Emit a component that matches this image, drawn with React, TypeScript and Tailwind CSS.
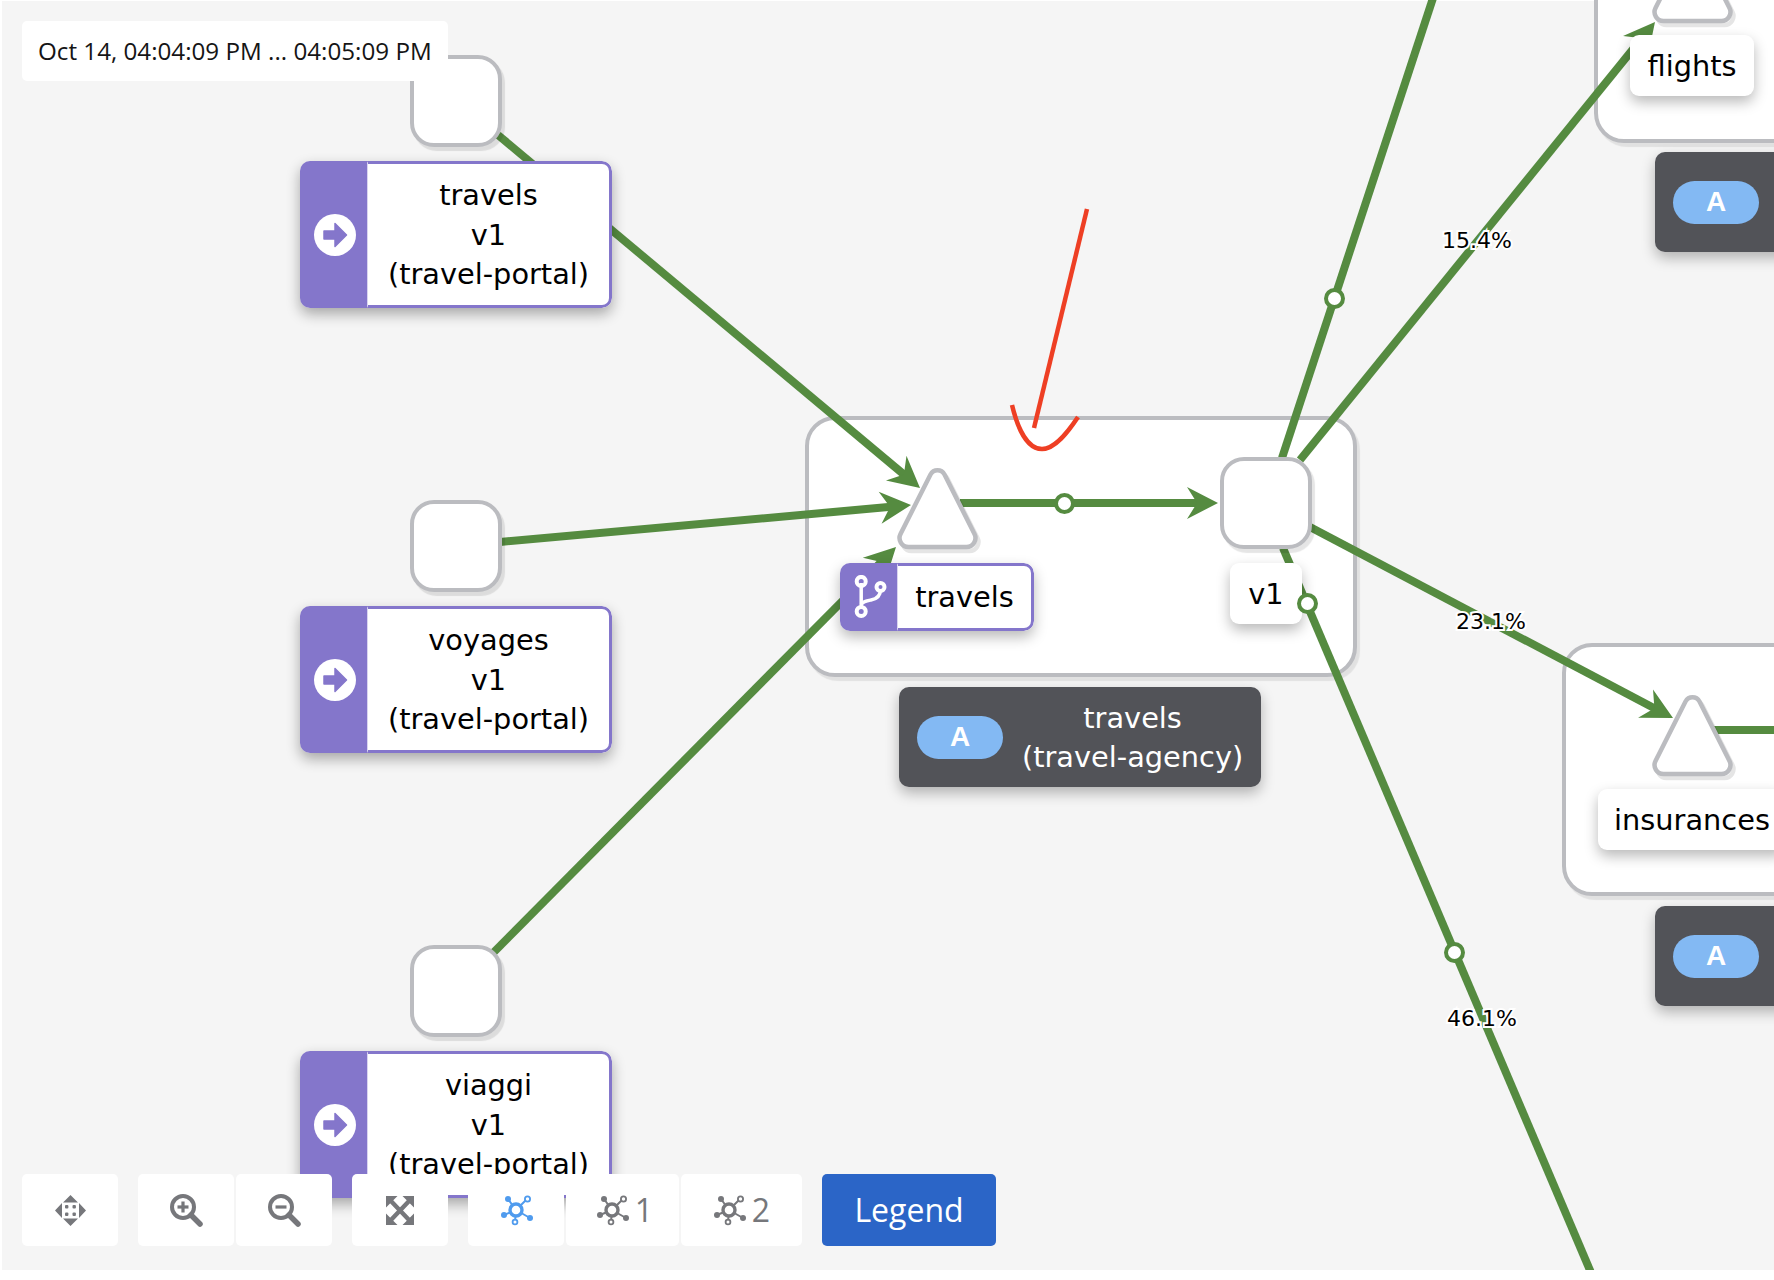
import clsx from "clsx";
import type { ReactNode } from "react";

const GREEN = "#558b40";

type Edge = { x1: number; y1: number; x2: number; y2: number; arrow?: boolean };

const edges: Edge[] = [
  { x1: 498, y1: 135, x2: 920, y2: 488, arrow: true },
  { x1: 500, y1: 542, x2: 911, y2: 505, arrow: true },
  { x1: 493, y1: 953, x2: 896, y2: 547, arrow: true },
  { x1: 960, y1: 503, x2: 1218, y2: 503, arrow: true },
  { x1: 1282, y1: 458, x2: 1434, y2: -5 },
  { x1: 1300, y1: 460, x2: 1655, y2: 22, arrow: true },
  { x1: 1310, y1: 527, x2: 1673, y2: 718, arrow: true },
  { x1: 1283, y1: 548, x2: 1592, y2: 1275 },
  { x1: 1714, y1: 730, x2: 1780, y2: 730 },
];

// swallowtail head, same size on every edge
function arrowHead(e: Edge) {
  const len = Math.hypot(e.x2 - e.x1, e.y2 - e.y1);
  const ux = (e.x2 - e.x1) / len;
  const uy = (e.y2 - e.y1) / len;
  const at = (back: number, side: number) =>
    `${e.x2 - ux * back - uy * side},${e.y2 - uy * back + ux * side}`;
  return [at(0, 0), at(31, 16), at(21, 0), at(31, -16)].join(" ");
}

function Edges() {
  return (
    <svg className="absolute left-0 top-0" width="1774" height="1270" viewBox="0 0 1774 1270">
      {edges.map((e, i) => {
        const len = Math.hypot(e.x2 - e.x1, e.y2 - e.y1);
        const trim = e.arrow ? 20 / len : 0;
        return (
          <g key={i}>
            <line
              x1={e.x1}
              y1={e.y1}
              x2={e.x2 - (e.x2 - e.x1) * trim}
              y2={e.y2 - (e.y2 - e.y1) * trim}
              stroke={GREEN}
              strokeWidth={8}
            />
            {e.arrow && <polygon points={arrowHead(e)} fill={GREEN} />}
          </g>
        );
      })}
    </svg>
  );
}

function Dot({ className }: { className: string }) {
  return (
    <div
      className={clsx(
        "absolute h-[21px] w-[21px] rounded-full border-4 border-[#558b40] bg-white",
        className,
      )}
    />
  );
}

function SquareNode({ className }: { className: string }) {
  return (
    <div
      className={clsx(
        "absolute h-[92px] w-[92px] rounded-[24px] border-[4.5px] border-[#bbbcc0] bg-white shadow-[3px_4px_1px_rgba(0,0,0,0.1)]",
        className,
      )}
    />
  );
}

const TRIANGLE =
  "M33.5 6.5A8 8 0 0 1 47.5 6.5L77.5 66A9 9 0 0 1 69.5 79L11.5 79A9 9 0 0 1 3.5 66Z";

function TriangleNode({ className }: { className: string }) {
  return (
    <svg
      className={clsx("absolute overflow-visible", className)}
      width="81"
      height="81"
      viewBox="0 0 81 81"
    >
      <path d={TRIANGLE} transform="translate(3 4)" fill="none" stroke="#000" strokeOpacity="0.1" strokeWidth="4.5" />
      <path d={TRIANGLE} fill="#fff" stroke="#bbbcc0" strokeWidth="4.5" />
    </svg>
  );
}

function Box({ className }: { className: string }) {
  return (
    <div
      className={clsx(
        "absolute rounded-[30px] border-[4.5px] border-[#bbbcc0] bg-white shadow-[3px_4px_1px_rgba(0,0,0,0.08)]",
        className,
      )}
    />
  );
}

function WhiteLabel({ className, children }: { className: string; children: ReactNode }) {
  return (
    <div
      className={clsx(
        "absolute flex h-[61px] items-center justify-center rounded-[9px] bg-white pt-0.5 text-[28.8px] text-black shadow-[0_6px_14px_rgba(0,0,0,0.28)]",
        className,
      )}
    >
      {children}
    </div>
  );
}

function ArrowCircle() {
  return (
    <svg width="42" height="42" viewBox="0 0 42 42">
      <circle cx="21" cy="21" r="21" fill="#fff" />
      <path d="M10 17h11v-7.5L32.5 21 21 32.5V25H10z" fill="#8476cb" strokeLinejoin="round" stroke="#8476cb" strokeWidth="1.5" />
    </svg>
  );
}

function WorkloadLabel({ className, lines }: { className: string; lines: string[] }) {
  return (
    <div
      className={clsx(
        "absolute flex h-[147px] w-[312px] overflow-hidden rounded-[10px] shadow-[0_6px_14px_rgba(0,0,0,0.32)]",
        className,
      )}
    >
      <div className="flex w-[67px] shrink-0 items-center justify-center bg-[#8476cb] pl-0.5">
        <ArrowCircle />
      </div>
      <div className="flex flex-1 flex-col items-center justify-center rounded-r-[10px] border-[3.5px] border-l border-[#8476cb] border-l-[#d9d4f0] bg-white pt-0.5 text-[28.8px] leading-[39.5px] text-black">
        {lines.map((l) => (
          <div key={l}>{l}</div>
        ))}
      </div>
    </div>
  );
}

function BranchIcon() {
  return (
    <svg width="36" height="44" viewBox="0 0 36 44" fill="none" stroke="#fff">
      <path d="M10.2 8V34" strokeWidth="3.5" />
      <path d="M10.2 29.5C12 26.5 15 26 20 25C26 24 29.5 20 29.5 14" strokeWidth="3.5" />
      <circle cx="10.2" cy="6.4" r="4.5" strokeWidth="4" />
      <circle cx="10.2" cy="36.4" r="4.5" strokeWidth="4" />
      <circle cx="29.5" cy="12" r="4" strokeWidth="4" />
    </svg>
  );
}

function DarkLabel({ className, lines }: { className: string; lines?: string[] }) {
  return (
    <div
      className={clsx(
        "absolute flex h-[100px] items-center gap-[19px] rounded-[10px] bg-[#525358] px-[18px] text-[28.8px] leading-[39px] text-white shadow-[0_6px_14px_rgba(0,0,0,0.28)]",
        className,
      )}
    >
      <div className="flex h-[43px] w-[86px] shrink-0 items-center justify-center rounded-full bg-[#83b9f3] font-['Liberation_Sans',sans-serif] text-[28px] font-bold leading-none">
        A
      </div>
      {lines && (
        <div className="flex flex-col items-center whitespace-nowrap pt-0.5">
          {lines.map((l) => (
            <div key={l}>{l}</div>
          ))}
        </div>
      )}
    </div>
  );
}

function Percent({ className, children }: { className: string; children: string }) {
  return (
    <div
      className={clsx(
        "absolute -translate-x-1/2 -translate-y-1/2 text-[22px] leading-none text-black [-webkit-text-stroke:4px_#fff] [paint-order:stroke_fill]",
        className,
      )}
    >
      {children}
    </div>
  );
}

function MoveIcon() {
  return (
    <svg width="31" height="31" viewBox="0 0 31 31" fill="#76777b">
      <path d="M15.5 0L23 7.5H8zM15.5 31L8 23.5H23zM0 15.5L7 8V23zM31 15.5L24 8V23z" strokeLinejoin="round" />
      <rect x="10" y="10" width="3.4" height="3.4" rx="1" />
      <rect x="17.5" y="10" width="3.4" height="3.4" rx="1" />
      <rect x="10" y="17.5" width="3.4" height="3.4" rx="1" />
      <rect x="17.5" y="17.5" width="3.4" height="3.4" rx="1" />
    </svg>
  );
}

function ZoomIcon({ plus }: { plus?: boolean }) {
  return (
    <svg width="33" height="33" viewBox="0 0 33 33" fill="none" stroke="#76777b">
      <circle cx="13" cy="13" r="11" strokeWidth="4" />
      <path d="M21 21L30 30" strokeWidth="5.5" strokeLinecap="round" />
      <path d="M7.5 13H18.5" strokeWidth="3.2" />
      {plus && <path d="M13 7.5V18.5" strokeWidth="3.2" />}
    </svg>
  );
}

function FitIcon() {
  return (
    <svg width="28" height="29" viewBox="0 0 28 29" fill="#76777b">
      <path d="M0 0H11.5L0 11.5ZM28 0V11.5L16.5 0ZM0 29V17.5L11.5 29ZM28 29H16.5L28 17.5Z" />
      <path d="M4 4L24 25M24 4L4 25" stroke="#76777b" strokeWidth="4.4" />
      <path d="M0 0V29M28 0V29" stroke="#76777b" strokeWidth="0" />
    </svg>
  );
}

function GraphIcon({ color }: { color: string }) {
  return (
    <svg width="33" height="31" viewBox="-16 -15 33 31" fill="none" stroke={color}>
      <path d="M-8 -11L0 0M11 -11L0 0M-12 5L0 0M14 8L0 0M-1 12L0 0" strokeWidth="2" />
      <circle cx="0" cy="0" r="6" fill="#fff" strokeWidth="3.4" />
      <circle cx="-8" cy="-11" r="3" fill={color} stroke="none" />
      <circle cx="11.5" cy="-11" r="2.6" fill="#fff" strokeWidth="1.8" />
      <circle cx="-12" cy="5" r="3" fill={color} stroke="none" />
      <circle cx="14" cy="8" r="3" fill={color} stroke="none" />
      <circle cx="-1" cy="12" r="2.4" fill="#fff" strokeWidth="1.8" />
    </svg>
  );
}

function ToolButton({ className, children }: { className: string; children: ReactNode }) {
  return (
    <div
      className={clsx(
        "flex h-[72px] items-center justify-center gap-1.5 rounded-[5px] bg-white font-['Open_Sans',sans-serif] text-[32px] text-[#76777b]",
        className,
      )}
    >
      {children}
    </div>
  );
}

export default function App() {
  return (
    <div className="h-[1280px] w-[1774px] overflow-hidden bg-white font-['DejaVu_Sans',sans-serif]">
      <div className="relative h-[1270px] w-full overflow-hidden bg-[#f5f5f5] shadow-[inset_2px_1px_0_#fff]">
        <Box className="left-[805px] top-[416px] h-[261px] w-[552px]" />
        <Box className="left-[1594px] top-[-120px] h-[263px] w-[400px]" />
        <Box className="left-[1562px] top-[643px] h-[253px] w-[400px]" />

        <Edges />

        <SquareNode className="left-[410px] top-[55px]" />
        <SquareNode className="left-[410px] top-[500px]" />
        <SquareNode className="left-[410px] top-[945px]" />
        <SquareNode className="left-[1220px] top-[457px]" />

        <TriangleNode className="left-[897px] top-[468px]" />
        <TriangleNode className="left-[1652px] top-[-58px]" />
        <TriangleNode className="left-[1652px] top-[695px]" />

        <WorkloadLabel className="left-[300px] top-[161px]" lines={["travels", "v1", "(travel-portal)"]} />
        <WorkloadLabel className="left-[300px] top-[606px]" lines={["voyages", "v1", "(travel-portal)"]} />
        <WorkloadLabel className="left-[300px] top-[1051px]" lines={["viaggi", "v1", "(travel-portal)"]} />

        <div className="absolute left-[840px] top-[563px] flex h-[68px] w-[194px] overflow-hidden rounded-[10px] shadow-[0_6px_14px_rgba(0,0,0,0.28)]">
          <div className="flex w-[57px] shrink-0 items-center justify-center bg-[#8476cb]">
            <BranchIcon />
          </div>
          <div className="flex flex-1 items-center justify-center rounded-r-[10px] border-[3.5px] border-l border-[#8476cb] border-l-[#d9d4f0] bg-white pt-0.5 text-[28.8px] text-black">
            travels
          </div>
        </div>

        <WhiteLabel className="left-[1230px] top-[563px] w-[72px]">v1</WhiteLabel>
        <WhiteLabel className="left-[1630px] top-[35px] w-[124px]">flights</WhiteLabel>
        <WhiteLabel className="left-[1598px] top-[789px] w-[188px]">insurances</WhiteLabel>

        <DarkLabel className="left-[899px] top-[687px] w-[362px]" lines={["travels", "(travel-agency)"]} />
        <DarkLabel className="left-[1655px] top-[152px] w-[300px]" />
        <DarkLabel className="left-[1655px] top-[906px] w-[300px]" />

        <Dot className="left-[1054px] top-[493px]" />
        <Dot className="left-[1324px] top-[288px]" />
        <Dot className="left-[1297px] top-[593px]" />
        <Dot className="left-[1444px] top-[942px]" />

        <Percent className="left-[1477px] top-[241px]">15.4%</Percent>
        <Percent className="left-[1491px] top-[622px]">23.1%</Percent>
        <Percent className="left-[1482px] top-[1019px]">46.1%</Percent>

        {/* hand drawn annotation */}
        <svg className="absolute left-0 top-0" width="1774" height="1270" viewBox="0 0 1774 1270" fill="none" stroke="#ee3f24" strokeWidth="4.5">
          <path d="M1087 209L1034 428" />
          <path d="M1012 405C1018 430 1028 449 1042 449C1055 449 1068 432 1078 417" />
        </svg>

        <div className="absolute left-[22px] top-[21px] flex h-[60px] w-[426px] items-center rounded-[5px] bg-white pl-[16px] font-['Open_Sans',sans-serif] text-[24.2px] text-[#151515]">
          Oct 14, 04:04:09 PM ... 04:05:09 PM
        </div>

        <div className="absolute left-[22px] top-[1174px] flex">
          <ToolButton className="w-24"><MoveIcon /></ToolButton>
          <ToolButton className="ml-5 w-24"><ZoomIcon plus /></ToolButton>
          <ToolButton className="ml-0.5 w-24"><ZoomIcon /></ToolButton>
          <ToolButton className="ml-5 w-24"><FitIcon /></ToolButton>
          <ToolButton className="ml-5 w-24"><GraphIcon color="#4f9bee" /></ToolButton>
          <ToolButton className="ml-0.5 w-[113px] pl-1"><GraphIcon color="#76777b" />1</ToolButton>
          <ToolButton className="ml-0.5 w-[121px]"><GraphIcon color="#76777b" />2</ToolButton>
          <div className="ml-5 flex h-[72px] w-[174px] items-center justify-center rounded-[5px] bg-[#2b65c7] font-['Open_Sans',sans-serif] text-[32px] text-white">
            Legend
          </div>
        </div>
      </div>
    </div>
  );
}
